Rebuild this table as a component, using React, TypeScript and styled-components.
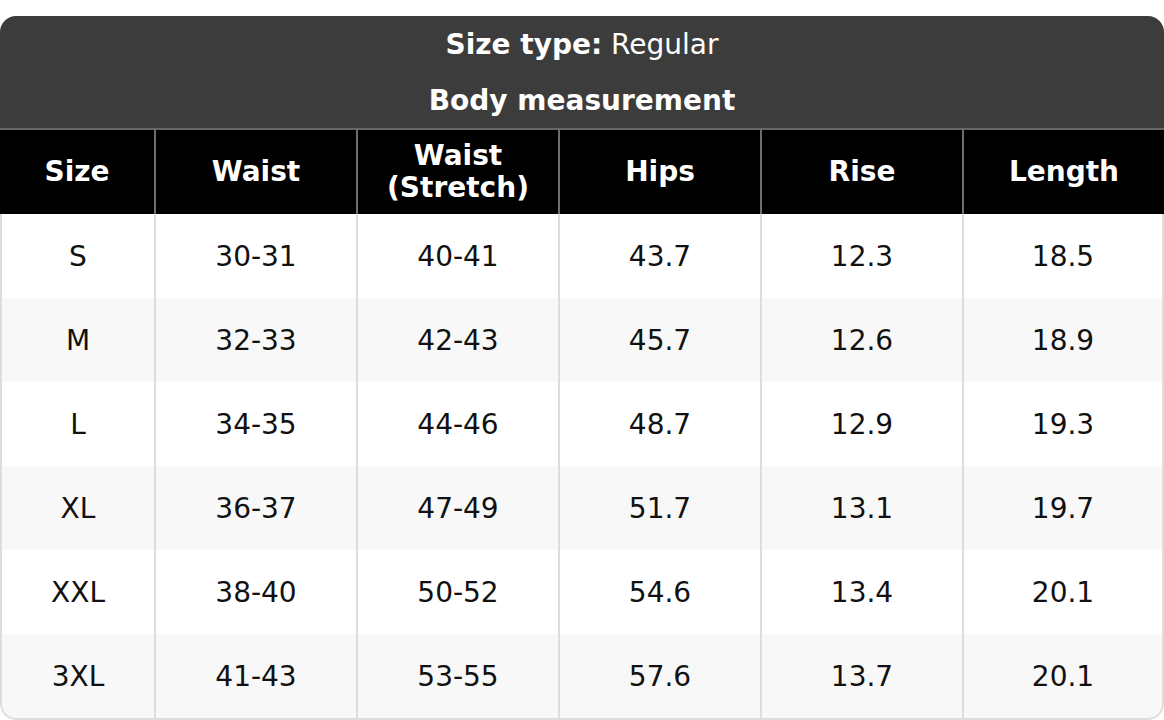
import React from "react";
import styled, { createGlobalStyle } from "styled-components";

const GlobalStyle = createGlobalStyle`
  body {
    margin: 0;
    background: #ffffff;
    font-family: "DejaVu Sans", Verdana, sans-serif;
  }
`;

const columns = ["Size", "Waist", "Waist\n(Stretch)", "Hips", "Rise", "Length"];

const rows: string[][] = [
  ["S", "30-31", "40-41", "43.7", "12.3", "18.5"],
  ["M", "32-33", "42-43", "45.7", "12.6", "18.9"],
  ["L", "34-35", "44-46", "48.7", "12.9", "19.3"],
  ["XL", "36-37", "47-49", "51.7", "13.1", "19.7"],
  ["XXL", "38-40", "50-52", "54.6", "13.4", "20.1"],
  ["3XL", "41-43", "53-55", "57.6", "13.7", "20.1"],
];

const App: React.FC = () => {
  return (
    <>
      <GlobalStyle />
      <Page>
        <Chart>
          <TitleBar>
            <TitleLine>
              <strong>Size type:</strong> Regular
            </TitleLine>
            <TitleLine>
              <strong>Body measurement</strong>
            </TitleLine>
          </TitleBar>
          <Table>
            <colgroup>
              <col style={{ width: 154 }} />
              <col />
              <col />
              <col />
              <col />
              <col />
            </colgroup>
            <thead>
              <tr>
                {columns.map((c) => (
                  <HeadCell key={c}>{c}</HeadCell>
                ))}
              </tr>
            </thead>
            <tbody>
              {rows.map((r, i) => (
                <BodyRow key={r[0]} $striped={i % 2 === 1} $last={i === rows.length - 1}>
                  {r.map((v, j) => (
                    <Cell key={j}>{v}</Cell>
                  ))}
                </BodyRow>
              ))}
            </tbody>
          </Table>
        </Chart>
      </Page>
    </>
  );
};

export default App;

const Page = styled.div`
  padding-top: 16px;
`;

const Chart = styled.div`
  width: 1164px;
  border-radius: 16px;
  overflow: hidden;
`;

const TitleBar = styled.div`
  background: #3c3c3c;
  color: #ffffff;
`;

const TitleLine = styled.div`
  height: 56px;
  display: flex;
  align-items: center;
  justify-content: center;
  font-size: 28px;
  white-space: pre;

  strong {
    font-weight: bold;
  }
`;

const Table = styled.table`
  width: 100%;
  table-layout: fixed;
  border-collapse: separate;
  border-spacing: 0;
  font-family: "DejaVu Sans", Verdana, sans-serif;
`;

const HeadCell = styled.th`
  height: 86px;
  padding: 0 6px;
  box-sizing: border-box;
  background: #000000;
  color: #ffffff;
  font-size: 28px;
  line-height: 32px;
  font-weight: bold;
  text-align: center;
  white-space: pre-line;
  border-top: 2px solid #666666;
  border-left: 2px solid #6e6e6e;

  &:first-child {
    border-left: none;
  }
`;

const BodyRow = styled.tr<{ $striped: boolean; $last: boolean }>`
  background: ${(p) => (p.$striped ? "#f8f8f8" : "#ffffff")};

  td {
    height: ${(p) => (p.$last ? 86 : 84)}px;
    border-bottom: ${(p) => (p.$last ? "2px solid #dddddd" : "none")};
  }
  ${(p) =>
    p.$last &&
    `
    td:first-child { border-bottom-left-radius: 16px; }
    td:last-child { border-bottom-right-radius: 16px; }
  `}
`;

const Cell = styled.td`
  box-sizing: border-box;
  padding: 0;
  font-size: 28px;
  color: #111111;
  text-align: center;
  border-left: 2px solid #dddddd;

  &:last-child {
    border-right: 2px solid #dddddd;
  }
`;
